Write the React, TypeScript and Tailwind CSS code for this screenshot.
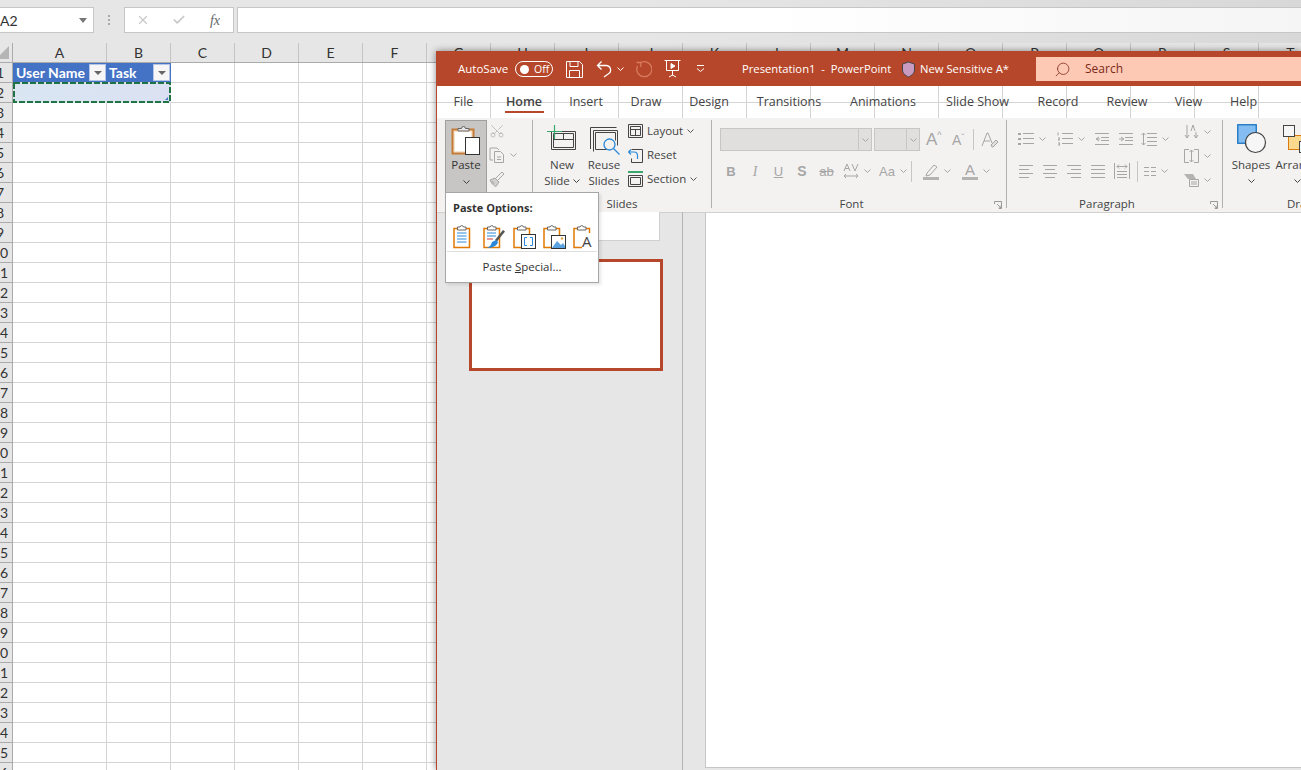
import { ReactNode } from 'react';
import { Scissors, Search, X, Check } from 'lucide-react';

const UI = "font-['Open_Sans',sans-serif]";
const GRAY = '#a6a6a6';

const letters = ['C', 'D', 'E', 'F', 'G', 'H', 'I', 'J', 'K', 'L', 'M', 'N', 'O', 'P', 'Q', 'R', 'S', 'T'];
const rows = Array.from({ length: 36 }, (_, i) => i + 1);

const Chev = ({ color = GRAY }: { color?: string }) => (
  <svg width="7" height="4" viewBox="0 0 7 4" className="shrink-0">
    <path d="M.5.5l3 3 3-3" fill="none" stroke={color} strokeWidth="1" />
  </svg>
);

const Ico = ({ w, h, children }: { w: number; h: number; children: ReactNode }) => (
  <svg width={w} height={h} viewBox={`0 0 ${w} ${h}`} fill="none" stroke={GRAY} className="shrink-0">
    {children}
  </svg>
);

const AlignIcon = ({ ends }: { ends: [number, number][] }) => (
  <Ico w={14} h={13}>
    {ends.map(([a, b], i) => (
      <path key={i} d={`M${a} ${i * 4 + 0.5}H${b}`} />
    ))}
  </Ico>
);

/* ---------- excel behind ---------- */

const FormulaBar = () => (
  <div className="h-[43px] bg-linear-to-r from-[#e6e6e6] via-[#e6e6e6] to-[#d8d8d8] pt-[7px] flex items-start">
    <div className="w-[94px] h-[26px] bg-white border border-[#c6c6c6] border-l-0 flex items-center justify-between pr-[6px] font-['Lato',sans-serif] text-[14px] text-[#333]">
      <span>A2</span>
      <span className="w-0 h-0 border-x-[4px] border-x-transparent border-t-[5px] border-t-[#777]" />
    </div>
    <div className="w-[30px] h-[26px] flex flex-col items-center justify-center gap-[2px]">
      <span className="w-[2px] h-[2px] bg-[#aaa]" />
      <span className="w-[2px] h-[2px] bg-[#aaa]" />
      <span className="w-[2px] h-[2px] bg-[#aaa]" />
    </div>
    <div className="w-[110px] h-[26px] bg-white border border-[#c6c6c6] flex items-center">
      <div className="w-[36px] flex justify-center">
        <X size={14} color="#c8c8c8" strokeWidth={2} />
      </div>
      <div className="w-[36px] flex justify-center">
        <Check size={14} color="#c8c8c8" strokeWidth={3} />
      </div>
      <div className="w-[36px] text-center font-['Liberation_Serif',serif] italic text-[14px] text-[#666]">fx</div>
    </div>
    <div className="ml-[3px] flex-1 h-[26px] bg-linear-to-r from-white via-white to-[#f5f5f5] border border-[#c6c6c6] border-r-0" />
  </div>
);

const ColHeader = ({ w, label }: { w: string; label: string }) => (
  <div className={`${w} shrink-0 h-full border-r border-[#c4c4c4] text-center text-[14px] leading-[19px] text-[#333]`}>{label}</div>
);

const FilterBtn = () => (
  <span className="w-[17px] h-[17px] bg-[#f6f6f6] border border-[#b4c6e7] flex items-center justify-center shrink-0">
    <span className="w-0 h-0 border-x-[4px] border-x-transparent border-t-[4px] border-t-[#666]" />
  </span>
);

const Sheet = () => (
  <div className="font-['Lato',sans-serif] relative">
    <div className="flex h-[20px] bg-[#e6e6e6] border-b border-[#ababab]">
      <div className="w-[13px] shrink-0 h-full border-r border-[#ababab] relative overflow-hidden">
        <svg width="12" height="19" viewBox="0 0 12 19">
          <path d="M9 3v13H-4z" fill="#b5b5b5" />
        </svg>
      </div>
      <ColHeader w="w-[94px]" label="A" />
      <ColHeader w="w-[64px]" label="B" />
      {letters.map((l) => (
        <ColHeader key={l} w="w-[64px]" label={l} />
      ))}
    </div>
    {rows.map((r) => (
      <div key={r} className="flex h-[20px] bg-white">
        <div className="w-[13px] shrink-0 h-full bg-[#e6e6e6] border-r border-b border-[#ababab] overflow-hidden">
          <div className="w-[26px] -ml-[13px] text-center text-[14px] leading-[19px] text-[#333]">{r}</div>
        </div>
        {r === 1 ? (
          <>
            <div className="w-[94px] shrink-0 h-full bg-[#4472c4] border-b border-[#d4d4d4] flex items-center justify-between pl-[3px] pr-[1px] text-white font-bold text-[14px] leading-none">
              <span className="pt-[1px]">User Name</span>
              <FilterBtn />
            </div>
            <div className="w-[64px] shrink-0 h-full bg-[#4472c4] border-b border-[#d4d4d4] flex items-center justify-between pl-[2px] pr-[1px] text-white font-bold text-[14px] leading-none">
              <span className="pt-[1px]">Task</span>
              <FilterBtn />
            </div>
          </>
        ) : r === 2 ? (
          <div className="w-[158px] shrink-0 h-full bg-linear-to-r from-[#d9e6f2] to-[#dbe1f2]" />
        ) : (
          <>
            <div className="w-[94px] shrink-0 h-full border-r border-b border-[#d4d4d4]" />
            <div className="w-[64px] shrink-0 h-full border-r border-b border-[#d4d4d4]" />
          </>
        )}
        {letters.map((l) => (
          <div key={l} className="w-[64px] shrink-0 h-full border-r border-b border-[#d4d4d4]" />
        ))}
      </div>
    ))}
    {/* copy marquee round A2:B2 */}
    <svg width="158" height="21" viewBox="0 0 158 21" className="absolute left-[13px] top-[39px]" fill="none">
      <rect x="1" y="1" width="156" height="19" stroke="#217346" strokeWidth="2" strokeDasharray="6 2" />
      <path d="M152 18h3v-3z" fill="#4472c4" />
    </svg>
  </div>
);

/* ---------- title bar icons ---------- */

const SaveIcon = () => (
  <svg width="17" height="17" viewBox="0 0 17 17" fill="none" stroke="#fff">
    <path d="M.5.5h13l3 3v13H.5z" />
    <path d="M4 .5v5h8v-5M3.5 16.5v-7h10v7" />
  </svg>
);

const UndoIcon = () => (
  <svg width="16" height="18" viewBox="0 0 16 18" fill="none" stroke="#fff" strokeWidth="1.300">
    <path d="M5.500 1.500L1.500 5.500l4 4M1.500 5.500h8.500a4.500 4.500 0 0 1 2.500 8.300L8 17" />
  </svg>
);

const RedoIcon = () => (
  <svg width="17" height="18" viewBox="0 0 17 18" fill="none" stroke="#d67a60" strokeWidth="1.300">
    <path d="M5.500 2.700A7.500 7.500 0 1 1 2.500 6M1.500 2.500h4.300V7" />
  </svg>
);

const PresentIcon = () => (
  <svg width="17" height="18" viewBox="0 0 17 18" fill="none" stroke="#fff">
    <path d="M.5.500h16M2.500.5v10h12V.5M8.500 10.500v5M5 17l3.500-2 3.500 2" />
    <path d="M7 3.500l4 2.500-4 2.500z" fill="#fff" />
  </svg>
);

const Customize = () => (
  <svg width="9" height="8" viewBox="0 0 9 8" fill="none" stroke="#fff">
    <path d="M1 .5h7M1 3.500l3.500 3 3.500-3" />
  </svg>
);

const TitleBar = () => (
  <div className="h-[35px] bg-[#b7472a] flex items-center text-white text-[11.5px] pl-[21px] pt-[1px] shrink-0">
    <span className="w-[57px]">AutoSave</span>
    <div className="w-[38px] h-[16px] rounded-full border border-white flex items-center pl-[4px] gap-[5px] text-[10.5px] leading-none">
      <span className="w-[9px] h-[9px] rounded-full bg-white" />
      <span>Off</span>
    </div>
    <div className="ml-[13px]"><SaveIcon /></div>
    <div className="ml-[13px]"><UndoIcon /></div>
    <div className="ml-[5px]"><Chev color="#fff" /></div>
    <div className="ml-[11px]"><RedoIcon /></div>
    <div className="ml-[12px]"><PresentIcon /></div>
    <div className="ml-[15px]"><Customize /></div>
    <span className="ml-[37px] w-[151px] whitespace-pre text-[11.25px]">Presentation1  -  PowerPoint</span>
    <svg width="15" height="17" viewBox="0 0 15 17" className="ml-[8px] shrink-0">
      <path d="M7.500 1l6 2v6c0 3.500-3 5.500-6 7-3-1.500-6-3.500-6-7V3z" fill="#c89bbf" stroke="#444" />
    </svg>
    <span className="ml-[4px] w-[116px] whitespace-nowrap text-[11.25px]">New Sensitive A*</span>
    <div className="flex-1 h-[24px] bg-[#fdc9b5] flex items-center pl-[18px] text-[#7c2a17] text-[12px]">
      <Search size={17} color="#7c2a17" strokeWidth={1.1} className="-scale-x-100" />
      <span className="ml-[14px]">Search</span>
    </div>
  </div>
);

/* ---------- tabs ---------- */

const tabs = [
  { label: 'File', cls: 'w-[19px] ml-[17px]' },
  { label: 'Home', cls: 'w-[38px] ml-[32px] font-semibold' },
  { label: 'Insert', cls: 'w-[32px] ml-[27px]' },
  { label: 'Draw', cls: 'w-[30px] ml-[29px]' },
  { label: 'Design', cls: 'w-[40px] ml-[28px]' },
  { label: 'Transitions', cls: 'w-[62px] ml-[29px]' },
  { label: 'Animations', cls: 'w-[64px] ml-[31px]' },
  { label: 'Slide Show', cls: 'w-[63px] ml-[31px]' },
  { label: 'Record', cls: 'w-[42px] ml-[28px]' },
  { label: 'Review', cls: 'w-[40px] ml-[28px]' },
  { label: 'View', cls: 'w-[27px] ml-[28px]' },
  { label: 'Help', cls: 'w-[27px] ml-[28px]' },
];

const Tabs = () => (
  <div className="h-[32px] flex text-[12.5px] text-[#444] shrink-0">
    {tabs.map((t) => (
      <div key={t.label} className={`${t.cls} shrink-0 relative text-center leading-[32px] whitespace-nowrap flex justify-center`}>
        {t.label}
        {t.label === 'Home' && <span className="absolute left-0 right-[-1px] bottom-[5px] h-[2px] bg-[#b7472a]" />}
      </div>
    ))}
  </div>
);

/* ---------- ribbon icons ---------- */

const PasteBig = () => (
  <svg width="30" height="32" viewBox="0 0 30 32">
    <rect x="1.500" y="5.500" width="21" height="24" fill="#f6e3cc" stroke="#c47b35" strokeWidth="2" />
    <rect x="4" y="8" width="16" height="19" fill="#fff" />
    <path d="M7 7V4.500h3.500a2 2 0 0 1 4 0H18V7z" fill="#e7e7e7" stroke="#666" />
    <rect x="14.500" y="13.500" width="14" height="17" fill="#fff" stroke="#333" />
  </svg>
);

const CopyIcon = () => (
  <Ico w={16} h={16}>
    <path d="M4 13H1V1h7l2 2" />
    <path d="M5.500 4.500h6l3 3v8h-9z" />
    <path d="M8 10h4M8 12.500h4" />
  </Ico>
);

const BrushIcon = () => (
  <Ico w={16} h={16}>
    <path d="M1 9l5-2 4 4-3 4.500c-2 0-5-4-6-6.500z" fill="#d2d0ce" />
    <path d="M7 7l6-6 2 2-6 6" />
    <path d="M3 10l2 3" />
  </Ico>
);

const NewSlideIcon = () => (
  <svg width="30" height="26" viewBox="0 0 30 26" fill="none">
    <path d="M4.500 24.500v-18h24v18z" stroke="#444" />
    <path d="M6.500 22.500v-14h20v14z" stroke="#444" />
    <path d="M6.500 14.500h20M16.500 8.500v6" stroke="#444" />
    <path d="M7.500 0v14M0 6.500h15" stroke="#3aa76d" strokeWidth="1.200" />
  </svg>
);

const ReuseIcon = () => (
  <svg width="31" height="28" viewBox="0 0 31 28" fill="none">
    <path d="M.500 22V.500h26" stroke="#444" />
    <path d="M3.500 24.500v-21h24v15" stroke="#444" />
    <path d="M5.500 22.500v-17h20v8M5.500 22.500h12" stroke="#444" />
    <circle cx="19.500" cy="17.500" r="5.500" fill="#f3f2f1" stroke="#2b88d8" strokeWidth="1.300" />
    <path d="M23.500 21.500l6 6" stroke="#2b88d8" strokeWidth="1.300" />
  </svg>
);

const LayoutIcon = () => (
  <svg width="15" height="14" viewBox="0 0 15 14" fill="none" stroke="#444">
    <path d="M.5.500h14v13H.5z" />
    <path d="M2.500 2.500h10v9h-10zM2.500 5.500h10M7.500 5.500v6" />
  </svg>
);

const ResetIcon = () => (
  <svg width="15" height="15" viewBox="0 0 15 15" fill="none">
    <path d="M3.500 1.500h11v13h-11v-4" stroke="#444" />
    <path d="M3 1.500L.500 4 3 6.500M1 4h5a3.500 3.500 0 0 1 3.500 3.500V11" stroke="#2b88d8" strokeWidth="1.200" />
  </svg>
);

const SectionIcon = () => (
  <svg width="15" height="16" viewBox="0 0 15 16" fill="none">
    <path d="M0 1h15" stroke="#3aa76d" strokeWidth="2" />
    <path d="M.5 4.500h14v11H.5z" stroke="#444" />
    <path d="M2.500 6.500h10v7h-10z" stroke="#444" />
  </svg>
);

const ShapesIcon = () => (
  <svg width="30" height="30" viewBox="0 0 30 30">
    <rect x=".75" y=".75" width="18.500" height="18.500" fill="#83bdf2" stroke="#0f6cbd" strokeWidth="1.200" />
    <circle cx="18.500" cy="18.500" r="10" fill="#f6f6f6" stroke="#444" strokeWidth="1.200" />
  </svg>
);

const ArrangeIcon = () => (
  <svg width="30" height="28" viewBox="0 0 30 28">
    <rect x="5.500" y="10.500" width="18" height="14" fill="#fad98f" stroke="#d97a0c" />
    <rect x=".5" y=".5" width="11" height="11" fill="#f6f6f6" stroke="#444" />
    <rect x="16.500" y="16.500" width="11" height="11" fill="#f6f6f6" stroke="#444" />
  </svg>
);

const SmallAction = ({ icon, label }: { icon: ReactNode; label: string }) => (
  <div className="h-[24px] flex items-center gap-[4px] text-[11.5px] text-[#444] whitespace-nowrap">
    <span className="w-[15px] flex justify-center">{icon}</span>
    <span>{label}</span>
    {label !== 'Reset' && <Chev color="#555" />}
  </div>
);

const Launcher = () => (
  <svg width="8" height="8" viewBox="0 0 8 8" fill="none" stroke="#999">
    <path d="M.5 3V.5H7.500V7.500H5M3 3l4 4M4.500 7H7V4.500" />
  </svg>
);

const Sep = () => <div className="w-px h-[88px] mt-[2px] bg-[#b3b0ad] shrink-0" />;

const Group = ({ w, label, launcher, children }: { w: string; label: string; launcher?: boolean; children: ReactNode }) => (
  <div className={`${w} shrink-0 flex flex-col relative`}>
    <div className="h-[78px] flex">{children}</div>
    <div className={`h-[16px] text-center text-[11.5px] leading-[15px] text-[#444] ${launcher ? 'pr-[15px]' : ''}`}>{label}</div>
    {launcher && (
      <div className="absolute right-[4px] bottom-[3px]">
        <Launcher />
      </div>
    )}
  </div>
);

const Cell = ({ w, children }: { w: string; children: ReactNode }) => (
  <div className={`${w} shrink-0 flex items-center justify-center gap-[5px]`}>{children}</div>
);

const Divider = ({ h = 'h-[21px]' }: { h?: string }) => <div className={`w-px ${h} bg-[#c8c6c4] shrink-0`} />;

const DimText = ({ cls, children }: { cls: string; children: ReactNode }) => (
  <span className={`font-['Liberation_Sans',sans-serif] text-[#a6a6a6] leading-none ${cls}`}>{children}</span>
);

const Combo = ({ w, inner }: { w: string; inner: string }) => (
  <div className={`${w} h-[23px] bg-[#e1dfdd] border border-[#c8c6c4] flex shrink-0`}>
    <div className={`${inner} border-r border-[#c8c6c4]`} />
    <div className="flex-1 flex items-center justify-center"><Chev /></div>
  </div>
);

const FontGroup = () => (
  <div className="pl-[8px] pt-[10px] w-full">
    <div className="flex items-center h-[23px]">
      <Combo w="w-[152px]" inner="w-[138px]" />
      <div className="w-[2px]" />
      <Combo w="w-[46px]" inner="w-[32px]" />
      <div className="ml-[6px] w-[15px] flex items-start">
        <DimText cls="text-[17px]">A</DimText><DimText cls="text-[9px]">^</DimText>
      </div>
      <div className="ml-[11px] w-[14px] flex items-start">
        <DimText cls="text-[14px]">A</DimText><DimText cls="text-[9px]">ˇ</DimText>
      </div>
      <div className="ml-[7px]"><Divider /></div>
      <div className="ml-[7px]">
        <Ico w={17} h={17}>
          <path d="M1 15L6 2h1l4 10M3 10h6" />
          <path d="M10 14l5-5 2 2-5 5h-1z" fill="#e1dfdd" />
        </Ico>
      </div>
    </div>
    <div className="flex items-center h-[22px] mt-[9px] -ml-[1px] text-[#a6a6a6]">
      <Cell w="w-[24px]"><DimText cls="text-[13px] font-bold">B</DimText></Cell>
      <Cell w="w-[24px]"><span className="font-['Liberation_Serif',serif] italic text-[14px] text-[#a6a6a6]">I</span></Cell>
      <Cell w="w-[23px]"><DimText cls="text-[13px] underline">U</DimText></Cell>
      <Cell w="w-[24px]"><DimText cls="text-[14px] font-bold">S</DimText></Cell>
      <Cell w="w-[25px]"><DimText cls="text-[13px] line-through">ab</DimText></Cell>
      <Cell w="w-[36px]">
        <Ico w={16} h={16}>
          <path d="M1 8l3-7 3 7M2 5.500h4M9 1l3 7 3-7M1 13h14M3 11l-2 2 2 2M13 11l2 2-2 2" />
        </Ico>
        <Chev />
      </Cell>
      <Cell w="w-[36px]"><DimText cls="text-[13px]">Aa</DimText><Chev /></Cell>
      <Divider />
      <div className="w-[9px]" />
      <Cell w="w-[32px]">
        <svg width="16" height="17" viewBox="0 0 16 17" fill="none" stroke={GRAY}>
          <path d="M4 10l7-8 3 2-7 8-4 1z" />
          <rect x="0" y="14" width="16" height="3" fill="#b5b3b1" stroke="none" />
        </svg>
        <Chev />
      </Cell>
      <div className="w-[7px]" />
      <Cell w="w-[32px]">
        <div className="flex flex-col items-center">
          <DimText cls="text-[15px]">A</DimText>
          <span className="w-[16px] h-[3px] bg-[#b5b3b1]" />
        </div>
        <Chev />
      </Cell>
    </div>
  </div>
);

const ParagraphGroup = () => (
  <div className="flex w-full pt-[9px]">
    <div className="w-[176px] shrink-0">
      <div className="flex items-center h-[24px] pl-[5px]">
        <Cell w="w-[39px]">
          <Ico w={16} h={14}>
            <path d="M0 1h3v2H0zM0 6h3v2H0zM0 11h3v2H0z" fill={GRAY} stroke="none" />
            <path d="M5 1.500h11M5 6.500h11M5 11.500h11" />
          </Ico>
          <Chev />
        </Cell>
        <Cell w="w-[39px]">
          <Ico w={16} h={14}>
            <path d="M1 .5v3M1 6h2l-2 2h2M1 11h2l-1 1 1 1H1" />
            <path d="M5 1.500h11M5 6.500h11M5 11.500h11" />
          </Ico>
          <Chev />
        </Cell>
        <div className="w-[24px] flex justify-center">
          <Ico w={14} h={12}>
            <path d="M0 .5h14M6 4.500h8M6 7.500h8M0 11.500h14M4 4L1 6l3 2M1 6h4" />
          </Ico>
        </div>
        <div className="w-[24px] flex justify-center">
          <Ico w={14} h={12}>
            <path d="M0 .5h14M6 4.500h8M6 7.500h8M0 11.500h14M2 4l3 2-3 2M0 6h5" />
          </Ico>
        </div>
        <Cell w="w-[34px]">
          <Ico w={16} h={14}>
            <path d="M2.500 1v12M.5 3l2-2 2 2M.5 11l2 2 2-2M6 1.500h10M6 5.500h10M6 9.500h10M6 13.500h10" />
          </Ico>
          <Chev />
        </Cell>
      </div>
      <div className="flex items-center h-[24px] mt-[8px] pl-[7px]">
        <Cell w="w-[24px]"><AlignIcon ends={[[0, 14], [0, 10], [0, 14], [0, 10]]} /></Cell>
        <Cell w="w-[24px]"><AlignIcon ends={[[0, 14], [2, 12], [0, 14], [2, 12]]} /></Cell>
        <Cell w="w-[24px]"><AlignIcon ends={[[0, 14], [4, 14], [0, 14], [4, 14]]} /></Cell>
        <Cell w="w-[24px]"><AlignIcon ends={[[0, 14], [0, 14], [0, 14], [0, 14]]} /></Cell>
        <Cell w="w-[24px]">
          <Ico w={16} h={16}>
            <path d="M.5 0v16M15.500 0v16M3 3.500h10M5 1.500l-2 2 2 2M11 1.500l2 2-2 2M3 8.500h10M3 11.500h10M3 14.500h10" />
          </Ico>
        </Cell>
        <div className="ml-[3px]"><Divider /></div>
        <Cell w="w-[36px]">
          <Ico w={12} h={10}>
            <path d="M0 1.500h5M7 1.500h5M0 5.500h5M7 5.500h5M0 9.500h5M7 9.500h5" />
          </Ico>
          <Chev />
        </Cell>
      </div>
    </div>
    <div className="flex flex-col -mt-[7px] w-[34px] pl-[1px]">
      <div className="h-[24px] flex items-center gap-[5px]">
        <Ico w={15} h={16}>
          <path d="M3 1v13M1 11l2 3 2-3M12 8v6M10 11l2 3 2-3M7 7l2-6 2 6" />
        </Ico>
        <Chev />
      </div>
      <div className="h-[24px] flex items-center gap-[5px]">
        <Ico w={15} h={14}>
          <path d="M5 .5H.5v13H5M10 .5h4.500v13H10M7.500 1v12M5.500 3l2-2 2 2M5.500 11l2 2 2-2" />
        </Ico>
        <Chev />
      </div>
      <div className="h-[24px] flex items-center gap-[5px]">
        <Ico w={15} h={14}>
          <path d="M0 1h9l3 5H4z" fill="#b5b3b1" stroke="none" />
          <path d="M5.500 6.500h9v7h-9zM7 9h6M7 11h6" fill="#f3f2f1" />
        </Ico>
        <Chev />
      </div>
    </div>
  </div>
);

/* ---------- paste menu icons ---------- */

const Clip = ({ children }: { children?: ReactNode }) => (
  <svg width="24" height="24" viewBox="0 0 24 24" fill="none">
    <path d="M1 3.500h15.500V22.500H1z" fill="#fff" stroke="#e07a00" strokeWidth="1.500" />
    <path d="M4.500 5V2h2.500a1.800 1.800 0 0 1 3.500 0H13v3z" fill="#fff" stroke="#666" />
    {children}
  </svg>
);

const PasteMenu = () => (
  <div className="absolute left-[8px] top-[141px] w-[154px] h-[91px] bg-white border border-[#a6a6a6] shadow-[2px_2px_3px_rgba(0,0,0,.1)]">
    <div className="pl-[7px] pt-[6px] text-[11px] font-bold text-[#333] leading-[17px]">Paste Options:</div>
    <div className="flex pl-[7px] mt-[9px] gap-[6px]">
      <Clip>
        <path d="M4 8h9.500M4 11h9.500M4 14h9.500M4 17h9.500" stroke="#2b88d8" />
      </Clip>
      <Clip>
        <path d="M4 8h9M4 11h9" stroke="#2b88d8" />
        <path d="M4 14h6" stroke="#d13438" />
        <path d="M12 15l8-10 2 1.500-8 10z" fill="#555" />
        <path d="M9 17l4-2 2 2c-1 4-6 6-11 6 3-1 4-3 5-6z" fill="#2b88d8" />
      </Clip>
      <Clip>
        <rect x="8.500" y="9.500" width="14" height="14" fill="#fff" stroke="#333" />
        <path d="M14 12.500h-2.500v8H14M17 12.500h2.500v8H17" stroke="#2b88d8" />
      </Clip>
      <Clip>
        <rect x="8.500" y="10.500" width="14" height="13" fill="#fff" stroke="#333" />
        <path d="M9 23l5-7 4 4 2-2 2 3v2z" fill="#5aa2e0" />
        <circle cx="19" cy="13.500" r="1.200" fill="#e8a33d" />
      </Clip>
      <div className="relative">
        <Clip />
        <span className="absolute left-[9px] top-[8px] font-['Open_Sans',sans-serif] text-[15px] leading-[16px] text-[#444] bg-white">A</span>
      </div>
    </div>
    <div className="h-px bg-[#e1dfdd] mx-[1px] mt-[2px]" />
    <div className="text-center text-[11.5px] leading-[30px] text-[#333]">
      Paste <span className="underline">S</span>pecial...
    </div>
  </div>
);

/* ---------- powerpoint window ---------- */

const Ribbon = () => (
  <div className="h-[95px] flex bg-[#f3f2f1] border-b border-[#d2d0ce] shrink-0">
    <Group w="w-[95px]" label="">
      <div className="ml-[8px] mt-[2px] w-[42px] h-[73px] bg-[#c8c6c4] border border-[#a19f9d] flex flex-col items-center shrink-0">
        <div className="mt-[3px]"><PasteBig /></div>
        <div className="text-[11.5px] leading-[16px] text-[#333] mt-[1px]">Paste</div>
        <div className="mt-[7px]"><Chev color="#444" /></div>
      </div>
      <div className="ml-[1px] pt-[1px] flex flex-col">
        <div className="h-[24px] flex items-center pl-[1px]">
          <Scissors size={16} color={GRAY} strokeWidth={1} className="-rotate-90" />
        </div>
        <div className="h-[24px] flex items-center gap-[5px] pl-[1px]"><CopyIcon /><Chev /></div>
        <div className="h-[24px] flex items-center pl-[1px]"><BrushIcon /></div>
      </div>
    </Group>
    <Sep />
    <Group w="w-[178px]" label="Slides">
      <div className="ml-[8px] w-[42px] flex flex-col items-center text-[11.5px] leading-[16px] text-[#444] shrink-0">
        <div className="h-[39px] pt-[7px]"><NewSlideIcon /></div>
        <div>New</div>
        <div className="flex items-center gap-[3px]">Slide <Chev color="#444" /></div>
      </div>
      <div className="w-[42px] flex flex-col items-center text-[11.5px] leading-[16px] text-[#444] shrink-0">
        <div className="h-[39px] pt-[9px] pl-[2px]"><ReuseIcon /></div>
        <div>Reuse</div>
        <div>Slides</div>
      </div>
      <div className="ml-[3px] pt-[1px] flex flex-col">
        <SmallAction icon={<LayoutIcon />} label="Layout" />
        <SmallAction icon={<ResetIcon />} label="Reset" />
        <SmallAction icon={<SectionIcon />} label="Section" />
      </div>
    </Group>
    <Sep />
    <Group w="w-[294px]" label="Font" launcher>
      <FontGroup />
    </Group>
    <Sep />
    <Group w="w-[215px]" label="Paragraph" launcher>
      <ParagraphGroup />
    </Group>
    <Sep />
    <div className="flex-1 flex flex-col overflow-hidden">
      <div className="h-[78px] flex text-[11.5px] leading-[16px] text-[#444]">
        <div className="ml-[7px] w-[42px] flex flex-col items-center shrink-0">
          <div className="h-[39px] pt-[6px] pl-[2px]"><ShapesIcon /></div>
          <div>Shapes</div>
          <div className="h-[16px] flex items-center"><Chev color="#444" /></div>
        </div>
        <div className="w-[50px] flex flex-col items-center shrink-0">
          <div className="h-[39px] pt-[7px] w-full pl-[11px]"><ArrangeIcon /></div>
          <div>Arrange</div>
          <div className="h-[16px] flex items-center"><Chev color="#444" /></div>
        </div>
      </div>
      <div className="h-[16px] text-[11.5px] leading-[15px] text-[#444] pl-[64px] whitespace-nowrap">Drawing</div>
    </div>
  </div>
);

const Workspace = () => (
  <div className="flex-1 flex bg-[#e6e6e6] min-h-0">
    <div className="w-[246px] shrink-0 border-r border-[#b3b3b3] flex flex-col pl-[32px] -mt-px">
      <div className="w-[191px] h-[29px] bg-white border border-[#d2d0ce] border-t-0 shrink-0" />
      <div className="w-[194px] h-[112px] mt-[18px] bg-white border-[3px] border-[#b7472a] shrink-0" />
    </div>
    <div className="w-[22px] shrink-0" />
    <div className="flex-1 mb-[2px] bg-white border-l border-b border-[#c6c6c6]" />
  </div>
);

const PowerPointWindow = () => (
  <div className={`absolute left-[436px] top-[51px] w-[865px] h-[719px] flex flex-col border-l border-[#b7472a] shadow-[0_0_7px_rgba(0,0,0,.45)] overflow-hidden ${UI}`}>
    <TitleBar />
    <Tabs />
    <Ribbon />
    <Workspace />
    <PasteMenu />
  </div>
);

export default function App() {
  return (
    <div className="w-[1301px] h-[770px] relative overflow-hidden bg-[#e6e6e6]">
      <FormulaBar />
      <Sheet />
      <PowerPointWindow />
    </div>
  );
}
